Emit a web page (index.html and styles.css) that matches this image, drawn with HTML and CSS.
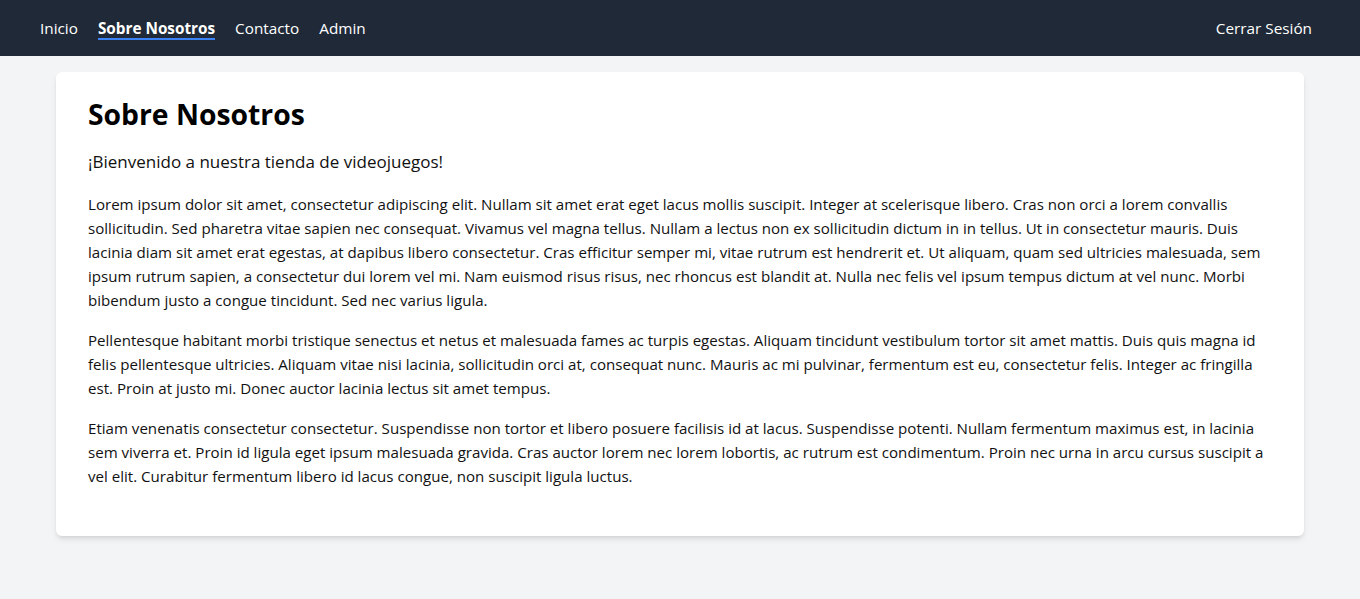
FILE: index.html
```html
<!DOCTYPE html>
<html lang="es">
<head>
<meta charset="utf-8">
<title>Sobre Nosotros</title>
<link rel="stylesheet" href="styles.css">
</head>
<body>
<nav class="navbar">
  <div class="nav-links">
    <a href="#" class="nav-link">Inicio</a>
    <a href="#" class="nav-link active">Sobre Nosotros</a>
    <a href="#" class="nav-link">Contacto</a>
    <a href="#" class="nav-link">Admin</a>
  </div>
  <a href="#" class="nav-link logout">Cerrar Sesión</a>
</nav>
<main class="container">
  <section class="card">
    <h1 class="title">Sobre Nosotros</h1>
    <p class="lead">¡Bienvenido a nuestra tienda de videojuegos!</p>
    <p class="text">Lorem ipsum dolor sit amet, consectetur adipiscing elit. Nullam sit amet erat eget lacus mollis suscipit. Integer at scelerisque libero. Cras non orci a lorem convallis sollicitudin. Sed pharetra vitae sapien nec consequat. Vivamus vel magna tellus. Nullam a lectus non ex sollicitudin dictum in in tellus. Ut in consectetur mauris. Duis lacinia diam sit amet erat egestas, at dapibus libero consectetur. Cras efficitur semper mi, vitae rutrum est hendrerit et. Ut aliquam, quam sed ultricies malesuada, sem ipsum rutrum sapien, a consectetur dui lorem vel mi. Nam euismod risus risus, nec rhoncus est blandit at. Nulla nec felis vel ipsum tempus dictum at vel nunc. Morbi bibendum justo a congue tincidunt. Sed nec varius ligula.</p>
    <p class="text">Pellentesque habitant morbi tristique senectus et netus et malesuada fames ac turpis egestas. Aliquam tincidunt vestibulum tortor sit amet mattis. Duis quis magna id felis pellentesque ultricies. Aliquam vitae nisi lacinia, sollicitudin orci at, consequat nunc. Mauris ac mi pulvinar, fermentum est eu, consectetur felis. Integer ac fringilla est. Proin at justo mi. Donec auctor lacinia lectus sit amet tempus.</p>
    <p class="text">Etiam venenatis consectetur consectetur. Suspendisse non tortor et libero posuere facilisis id at lacus. Suspendisse potenti. Nullam fermentum maximus est, in lacinia sem viverra et. Proin id ligula eget ipsum malesuada gravida. Cras auctor lorem nec lorem lobortis, ac rutrum est condimentum. Proin nec urna in arcu cursus suscipit a vel elit. Curabitur fermentum libero id lacus congue, non suscipit ligula luctus.</p>
  </section>
</main>
</body>
</html>
```
FILE: styles.css
```css
* { box-sizing: border-box; }
html, body { margin: 0; padding: 0; }
body {
  background: #f3f4f6;
  font-family: "Open Sans", "Noto Sans", sans-serif;
  color: #111;
  min-height: 599px;
}
.navbar {
  height: 56px;
  background: #1f2937;
  display: flex;
  align-items: center;
  justify-content: space-between;
  padding: 0 48px 0 40px;
}
.nav-links {
  display: flex;
  align-items: center;
  gap: 20px;
}
.nav-link {
  color: #ffffff;
  text-decoration: none;
  font-size: 15.3px;
  line-height: 20px;
  padding-top: 2px;
  border-bottom: 2px solid transparent;
}
.nav-link.active {
  font-weight: 700;
  border-bottom-color: #3b82f6;
}
.container {
  max-width: 1280px;
  margin: 0 auto;
  padding: 16px;
}
.card {
  background: #ffffff;
  border-radius: 6px;
  box-shadow: 0 4px 6px -1px rgba(0,0,0,0.1), 0 2px 4px -2px rgba(0,0,0,0.1);
  padding: 24px 32px 32px;
}
.title {
  margin: 0 0 16px;
  font-size: 28.3px;
  line-height: 36px;
  font-weight: 700;
  color: #000;
}
.lead {
  margin: 0 0 16px;
  font-size: 17px;
  line-height: 28px;
}
.text {
  margin: 0 0 16px;
  font-size: 15.1px;
  line-height: 24px;
}
```
